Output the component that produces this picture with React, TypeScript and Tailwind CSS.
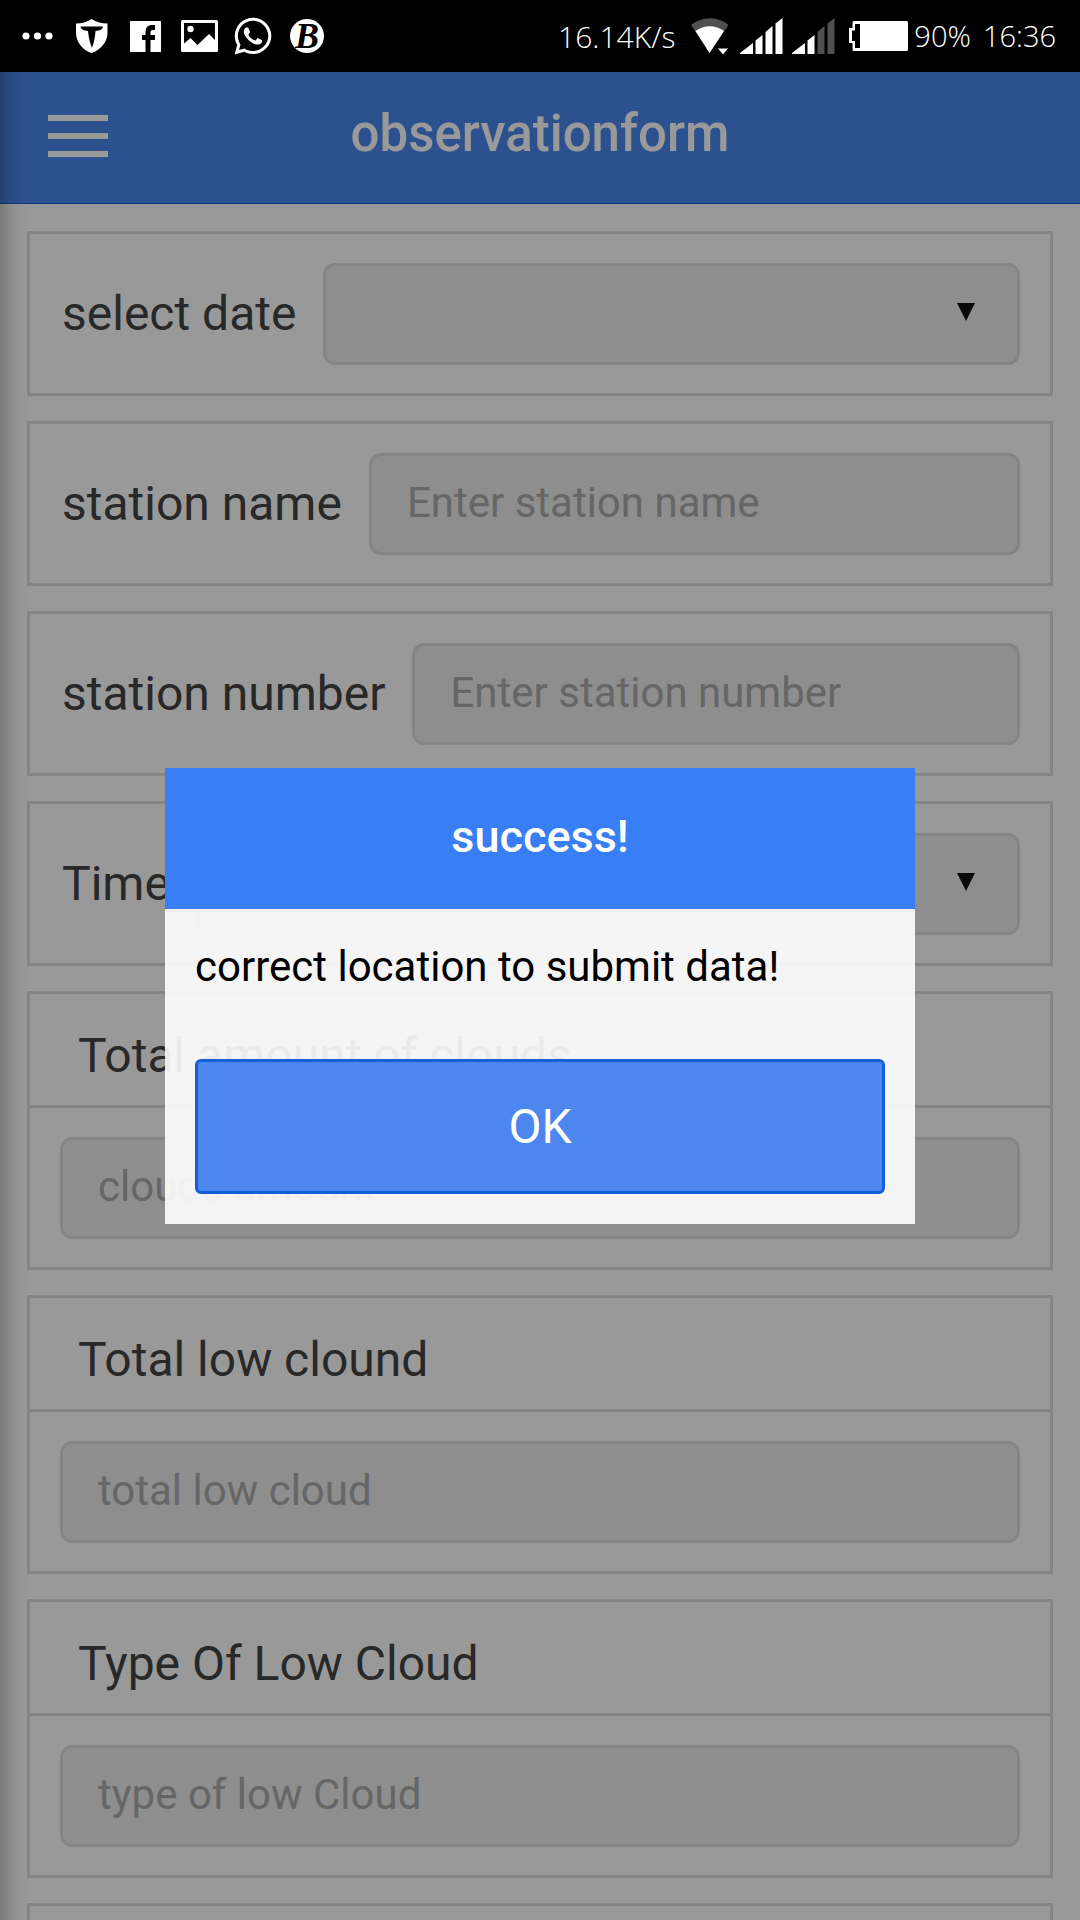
import React, { useId } from "react";
import { FaWhatsapp } from "react-icons/fa";

const controlClass =
  "block h-[102px] w-full appearance-none rounded-xl border-[3px] border-[#ddd] bg-[#ededed] px-[35px] pb-1 text-[42px] text-[#111] outline-none placeholder:text-[#aaa] placeholder:opacity-100";

function SignalBars({ level }: { level: number }) {
  const bars = ["M0 36V35L13 25V36Z", "M15.5 36V22.5L22.5 17V36Z", "M25.5 36V14L32.5 8V36Z", "M35.5 36V5.5L42.5 0V36Z"];
  return (
    <svg className="h-9 w-[43px]" viewBox="0 0 43 36" aria-hidden="true">
      {bars.map((d, i) => (
        <path key={d} d={d} fill={i < level ? "#fff" : "#505050"} />
      ))}
    </svg>
  );
}

function StatusBar() {
  return (
    <div className="flex h-[72px] shrink-0 items-center justify-between bg-black pl-[22px] pr-6 text-white">
      <div className="flex items-center">
        <svg className="h-8 w-8" viewBox="0 0 32 32" fill="#fff" aria-hidden="true">
          <circle cx="4" cy="16" r="3.6" />
          <circle cx="15.500" cy="16" r="3.6" />
          <circle cx="27" cy="16" r="3.6" />
        </svg>
        <svg className="ml-[22px] h-[34px] w-8" viewBox="0 0 32 34" aria-hidden="true">
          <path d="M15.500 0C20 3 26 4.500 31.500 4.500V14C31.500 23 24.500 31 15.500 34C6.500 31 0 23 0 14V4.500C5.500 4.500 11 3 15.500 0Z" fill="#fff" />
          <path d="M4.500 7.500H27C26.500 10.500 24 11.500 19.500 12C19 18 18 24 16 29C14 24 12.500 18 12 12C7.500 11.500 5 10.500 4.500 7.500Z" fill="#000" />
        </svg>
        <svg className="ml-[22px] h-[31px] w-[31px]" viewBox="0 0 31 31" aria-hidden="true">
          <path d="M0 0H31V31H0Z" fill="#fff" />
          <path d="M15.500 31V19H12V14H15.500V11C15.500 6.500 18 4 22 4H25V9H22.800C21 9 20.500 10 20.500 11.500V14H25V19H20.500V31Z" fill="#000" />
        </svg>
        <svg className="ml-5 h-8 w-[37px]" viewBox="0 0 37 32" aria-hidden="true">
          <rect width="37" height="32" rx="1.500" fill="#fff" />
          <path d="M3 3H34V20L28 14L16.500 25L9.500 18L3 23.500Z" fill="#000" />
          <circle cx="9.500" cy="9" r="3.200" fill="#fff" />
        </svg>
        <FaWhatsapp className="ml-[14px] text-[42px]" aria-hidden="true" />
        <span className="ml-4 flex size-[34px] items-center justify-center rounded-full bg-white font-['Liberation_Serif',serif] text-[36px] leading-none font-bold text-black italic">
          B
        </span>
      </div>
      <div className="flex items-center font-['Open_Sans',sans-serif] text-[29px] font-light">
        <span className="text-[30px]">16.14K/s</span>
        <svg className="ml-4 h-9 w-[38px]" viewBox="0 0 38 36" aria-hidden="true">
          <path d="M0 7C11 -2 27 -2 37.500 7L18.500 35Z" fill="#505050" />
          <path d="M4.500 13C13 6.500 24.500 6.500 33 13L18.500 35Z" fill="#fff" />
          <path d="M26 30H38L32 37Z" fill="#fff" stroke="#000" strokeWidth="1" />
        </svg>
        <div className="ml-[11px] flex gap-[9px]">
          <SignalBars level={4} />
          <SignalBars level={2} />
        </div>
        <svg className="ml-[14px] h-[30px] w-[59px]" viewBox="0 0 59 30" aria-hidden="true">
          <path d="M5 0H57.500Q59 0 59 1.500V28.500Q59 30 57.500 30H5Q3.500 30 3.500 28.500V22H0V7H3.500V1.500Q3.500 0 5 0Z" fill="#fff" />
          <path d="M6 3H11V27H6V20H3V9.500H6Z" fill="#000" />
        </svg>
        <span className="ml-1.5">90%</span>
        <span className="ml-3">16:36</span>
      </div>
    </div>
  );
}

function Select({ id }: { id: string }) {
  return (
    <div className="relative flex-1">
      <select id={id} className={controlClass} defaultValue="">
        <option value="" />
      </select>
      <svg className="pointer-events-none absolute top-10 right-[45px] h-[18px] w-[18px]" viewBox="0 0 18 18" aria-hidden="true">
        <path d="M0 0H18L9 18Z" fill="#111" />
      </svg>
    </div>
  );
}

function RowField({ label, placeholder }: { label: string; placeholder?: string }) {
  const id = useId();
  return (
    <div className="flex items-center border-[3px] border-[#ddd] pt-[29px] pr-[30px] pb-7 pl-8">
      <label htmlFor={id} className="mr-[27px] shrink-0 text-[48px] leading-[56px]">
        {label}
      </label>
      {placeholder ? (
        <div className="min-w-0 flex-1">
          <input id={id} type="text" placeholder={placeholder} className={controlClass} />
        </div>
      ) : (
        <Select id={id} />
      )}
    </div>
  );
}

function StackedField({ label, placeholder }: { label: string; placeholder: string }) {
  const id = useId();
  return (
    <div className="border-[3px] border-[#ddd]">
      <div className="border-b-[3px] border-[#ddd] px-12 pt-[34px] pb-[21px]">
        <label htmlFor={id} className="block text-[48px] leading-[56px]">
          {label}
        </label>
      </div>
      <div className="px-[30px] pt-[29px] pb-7">
        <input id={id} type="text" placeholder={placeholder} className={controlClass} />
      </div>
    </div>
  );
}

export default function App() {
  return (
    <div className="flex h-screen flex-col overflow-hidden bg-white font-['Roboto',sans-serif] text-[#444]">
      <StatusBar />
      <div className="relative flex min-h-0 flex-1 flex-col">
        <header className="grid h-[132px] shrink-0 grid-cols-[1fr_auto_1fr] items-center border-b border-[#145fd7] bg-[#4a87ee] px-12 pb-1">
          <button type="button" aria-label="Menu" className="flex w-[60px] flex-col gap-3">
            <span className="h-1.5 bg-white" />
            <span className="h-1.5 bg-white" />
            <span className="h-1.5 bg-white" />
          </button>
          <h1 className="pb-1 text-[51px] leading-[60px] font-medium text-white">observationform</h1>
        </header>
        <form className="flex min-h-0 flex-1 flex-col gap-[25px] overflow-y-auto px-[27px] pt-[27px] [scrollbar-width:none] *:shrink-0">
          <RowField label="select date" />
          <RowField label="station name" placeholder="Enter station name" />
          <RowField label="station number" placeholder="Enter station number" />
          <RowField label="Time" />
          <StackedField label="Total amount of clouds" placeholder="clouds amount" />
          <StackedField label="Total low clound" placeholder="total low cloud" />
          <StackedField label="Type Of Low Cloud" placeholder="type of low Cloud" />
          <div className="h-[165px] border-[3px] border-[#ddd]" />
        </form>

        <div className="pointer-events-none absolute inset-y-0 left-0 w-7 bg-linear-to-r from-black/20 via-black/5 to-transparent" />

        <div className="absolute inset-0 flex items-center justify-center bg-black/40">
          <div role="alertdialog" aria-labelledby="popup-title" aria-describedby="popup-text" className="w-[750px] max-w-full bg-white/90">
            <div className="border-b-[3px] border-[#eee] bg-[#387ef5] bg-clip-padding py-[42px] text-center">
              <h2 id="popup-title" className="pb-1 text-[45px] leading-[53px] font-medium text-white">
                success!
              </h2>
            </div>
            <div className="px-[30px] pt-[27px] pb-[30px]">
              <p id="popup-text" className="text-[42px] leading-[56px] text-black">
                correct location to submit data!
              </p>
              <button
                type="button"
                className="mt-16 block h-[135px] w-full rounded-md border-[3px] border-[#145fd7] bg-[#4785ee]/98 text-[48px] text-white"
              >
                OK
              </button>
            </div>
          </div>
        </div>
      </div>
    </div>
  );
}
